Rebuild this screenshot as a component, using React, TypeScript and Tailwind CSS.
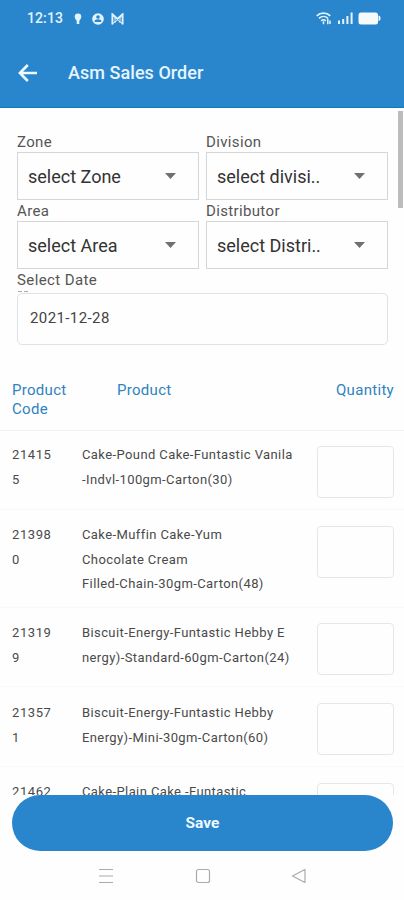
const filters = [
  { label: "Zone", value: "select Zone" },
  { label: "Division", value: "select divisi.." },
  { label: "Area", value: "select Area" },
  { label: "Distributor", value: "select Distri.." },
];

const products = [
  {
    code: ["21415", "5"],
    name: ["Cake-Pound Cake-Funtastic Vanila", "-Indvl-100gm-Carton(30)"],
    height: "h-[79px]",
    textOffset: "pt-3",
    inputOffset: "mt-[15px]",
  },
  {
    code: ["21398", "0"],
    name: ["Cake-Muffin Cake-Yum", "Chocolate Cream", "Filled-Chain-30gm-Carton(48)"],
    height: "h-[98px]",
    textOffset: "pt-[13px]",
    inputOffset: "mt-4",
  },
  {
    code: ["21319", "9"],
    name: ["Biscuit-Energy-Funtastic Hebby E", "nergy)-Standard-60gm-Carton(24)"],
    height: "h-[79px]",
    textOffset: "pt-[13px]",
    inputOffset: "mt-[15px]",
  },
  {
    code: ["21357", "1"],
    name: ["Biscuit-Energy-Funtastic Hebby", "Energy)-Mini-30gm-Carton(60)"],
    height: "h-20",
    textOffset: "pt-[14px]",
    inputOffset: "mt-4",
  },
  {
    code: ["21462"],
    name: ["Cake-Plain Cake -Funtastic"],
    height: "h-20",
    textOffset: "pt-[13px]",
    inputOffset: "mt-4",
  },
];

const StatusBar = () => (
  <div className="flex h-9 items-center pt-px pr-[23px] pl-[27px] text-[#e3f3fd]">
    <span className="w-[47px] text-[14px] font-medium tracking-[0.1px]">12:13</span>
    <svg width="8" height="12" viewBox="0 0 8 12" fill="currentColor">
      <path d="M4 .5a3.300 3.300 0 0 1 3.300 3.300C7.300 5.800 5.800 6.700 5.300 8.200V11H2.700V8.200C2.200 6.700.7 5.800.7 3.800A3.300 3.300 0 0 1 4 .5Z" />
    </svg>
    <svg className="ml-[10px]" width="12" height="12" viewBox="0 0 12 12">
      <circle cx="6" cy="6" r="5.8" fill="currentColor" />
      <circle cx="6" cy="4" r="1.8" fill="#2986cc" />
      <path d="M2.700 8.900V8C2.700 6.900 3.900 6.200 6 6.200S9.300 6.900 9.300 8v.9Z" fill="#2986cc" />
    </svg>
    <svg className="ml-[7px]" width="13" height="12" viewBox="0 0 13 12" fill="none" stroke="currentColor">
      <path d="M1.400 11.500V1.200L6.500 6l5.100-4.800v10.300" strokeWidth="1.900" />
      <path d="M1.500 10.800 6.500 7l5 3.800M4 3v7M9 3v7" strokeWidth="1" />
    </svg>
    <div className="ml-auto flex items-center gap-[5px]">
      <svg className="mr-px" width="16" height="13" viewBox="0 0 16 13" fill="none" stroke="currentColor">
        <path d="M.8 3.800C4.400.2 10.600.2 14.200 3.800" strokeWidth="1.900" />
        <path d="M3 6.400c2.600-2.500 6.400-2.500 9 0M5.200 8.800c1.300-1.200 3.300-1.200 4.600 0" strokeWidth="1.600" />
        <path d="M7.500 9.200v3M11.800 6.800v5.400M14 8.500v3.500" strokeWidth="1.500" />
      </svg>
      <svg width="15" height="13" viewBox="0 0 15 13" fill="currentColor">
        <path d="M0 8.500h2V12H0zM4.200 7h2v5h-2zM8.400 4h2v8h-2zM12.600.5h2V12h-2z" />
      </svg>
      <svg width="23" height="13" viewBox="0 0 23 13">
        <rect x=".5" y=".5" width="19.500" height="12" rx="2.500" fill="#f5fafb" />
        <path d="M20.500 3.500c1.400 0 2 1.400 2 2.800s-.6 2.800-2 2.800Z" fill="#f5fafb" />
      </svg>
    </div>
  </div>
);

const AppHeader = () => (
  <header className="h-[108px] shrink-0 border-b border-[#1478be] bg-[#2986cc]">
    <StatusBar />
    <div className="flex h-[73px] items-center pl-[18px] text-[#f0f9ff]">
      <svg width="20" height="18" viewBox="0 0 20 18" fill="none" stroke="currentColor" strokeWidth="2.600">
        <path d="M9.800 1 1.900 9l7.900 8M2 9h17" />
      </svg>
      <h1 className="ml-[30px] text-[18px] font-medium tracking-[0.05px] text-[#e6f5ff]">Asm Sales Order</h1>
    </div>
  </header>
);

const SelectField = ({ label, value }: { label: string; value: string }) => (
  <div>
    <div className="h-5 text-[15px] leading-[21px] tracking-[0.35px]">{label}</div>
    <button className="flex h-12 w-full items-center justify-between border border-[#d6d6d6] pr-[22px] pl-[10px] text-[18px] text-[#333]">
      {value}
      <svg width="11" height="6" viewBox="0 0 11 6" fill="#707070">
        <path d="M0 0h11L5.500 6Z" />
      </svg>
    </button>
  </div>
);

const FilterForm = () => (
  <section className="pt-6 pr-4 pl-[17px] text-[#555]">
    <div className="grid grid-cols-2 gap-x-[7px] gap-y-px">
      {filters.map((filter) => (
        <SelectField key={filter.label} {...filter} />
      ))}
    </div>
    <div className="mt-px h-[20px] text-[15px] leading-5 tracking-[0.4px]">Select Date</div>
    <div className="flex h-[3px] gap-[2px] pt-px pl-px">
      <span className="h-px w-1 bg-[#aaa]" />
      <span className="h-px w-1 bg-[#aaa]" />
    </div>
    <div className="flex h-[52px] items-center rounded-[5px] border border-[#e2e2e2] pb-[2px] pl-3 text-[15px] tracking-[0.4px] text-[#444]">
      2021-12-28
    </div>
  </section>
);

const ProductTable = () => (
  <section>
    <div className="flex h-[86px] border-b border-[#f2f2f2] pt-[36px] pr-[10px] pl-3 text-[15px] leading-[18.500px] tracking-[0.3px] text-[#2f83c0]">
      <div className="w-[105px]">
        Product
        <br />
        Code
      </div>
      <div className="flex-1">Product</div>
      <div>Quantity</div>
    </div>
    {products.map((product) => (
      <div
        key={product.code[0]}
        className={`flex border-b border-[#f8f8f8] pr-[10px] pl-3 text-[13px] leading-[24.700px] text-[#4a4a4a] ${product.height}`}
      >
        <div className={`w-[70px] shrink-0 tracking-[0.6px] ${product.textOffset}`}>
          {product.code.map((line) => (
            <div key={line}>{line}</div>
          ))}
        </div>
        <div className={`flex-1 tracking-[0.4px] whitespace-nowrap ${product.textOffset}`}>
          {product.name.map((line) => (
            <div key={line}>{line}</div>
          ))}
        </div>
        <div className={`h-[52px] w-[77px] shrink-0 rounded-[4px] border border-[#e6e6e6] ${product.inputOffset}`} />
      </div>
    ))}
  </section>
);

const NavigationBar = () => (
  <nav className="flex h-[49px] items-center justify-between pr-[97px] pl-[98px]">
    <svg width="16" height="16" viewBox="0 0 16 16" stroke="#aaa" strokeWidth="1.200">
      <path d="M1 1.500h14M1 8h14M1 14.500h14" />
    </svg>
    <svg width="16" height="16" viewBox="0 0 16 16" fill="none" stroke="#aaa" strokeWidth="1.200">
      <rect x="1.500" y="1.500" width="13" height="13" rx="2" />
    </svg>
    <svg width="16" height="16" viewBox="0 0 16 16" fill="none" stroke="#aaa" strokeWidth="1.200" strokeLinejoin="round">
      <path d="M14 1.500v13L1.500 8Z" />
    </svg>
  </nav>
);

const App = () => {
  return (
    <div className="flex h-[900px] w-[404px] flex-col overflow-hidden bg-[#fefefe] font-['Roboto',sans-serif]">
      <AppHeader />
      <main className="relative min-h-0 flex-1 overflow-hidden">
        <FilterForm />
        <ProductTable />
        {/* scroll indicator */}
        <div className="absolute top-[3px] right-[1px] h-[97px] w-[5px] bg-[#bcbcbc]" />
      </main>
      <footer className="shrink-0">
        <div className="pr-[11px] pl-3">
          <button className="h-14 w-full rounded-full bg-[#2986cc] pt-[2px] text-[15.500px] font-bold text-[#eef9ff]">
            Save
          </button>
        </div>
        <NavigationBar />
      </footer>
    </div>
  );
};

export default App;
